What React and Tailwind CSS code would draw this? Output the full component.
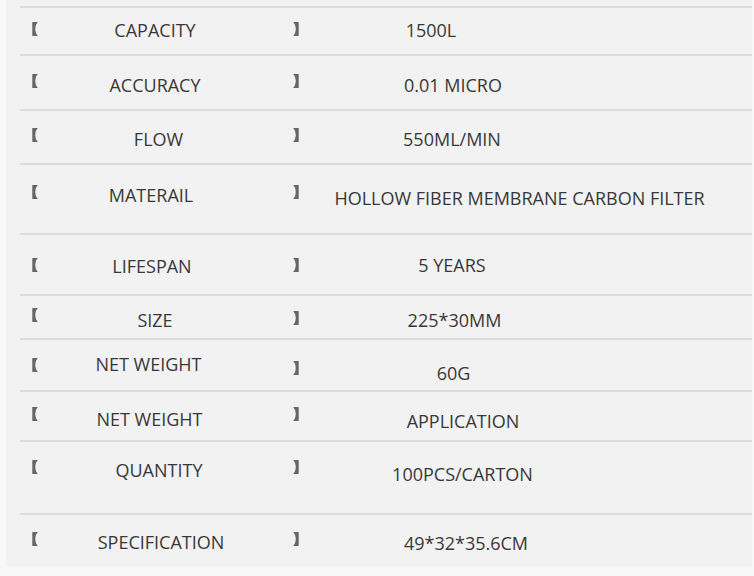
import React from "react";

const rows = [
  { label: "CAPACITY", value: "1500L", h: "h-[48px]", lb: "mt-[14px]", rb: "mt-[14px]", lt: "mt-[10px]", lw: "w-[234px]", vt: "mt-[10px]", vw: "w-[264px]" },
  { label: "ACCURACY", value: "0.01 MICRO", h: "h-[55px]", lb: "mt-[18px]", rb: "mt-[18px]", lt: "mt-[17px]", lw: "w-[234px]", vt: "mt-[17px]", vw: "w-[308px]" },
  { label: "FLOW", value: "550ML/MIN", h: "h-[54px]", lb: "mt-[17px]", rb: "mt-[17px]", lt: "mt-[16px]", lw: "w-[241px]", vt: "mt-[16px]", vw: "w-[306px]" },
  { label: "MATERAIL", value: "HOLLOW FIBER MEMBRANE CARBON FILTER", h: "h-[70px]", lb: "mt-[20px]", rb: "mt-[20px]", lt: "mt-[18px]", lw: "w-[226px]", vt: "mt-[21px]", vw: "w-[441px]" },
  { label: "LIFESPAN", value: "5 YEARS", h: "h-[61px]", lb: "mt-[23px]", rb: "mt-[23px]", lt: "mt-[19px]", lw: "w-[228px]", vt: "mt-[18px]", vw: "w-[306px]" },
  { label: "SIZE", value: "225*30MM", h: "h-[44px]", lb: "mt-[12px]", rb: "mt-[15px]", lt: "mt-[12px]", lw: "w-[234px]", vt: "mt-[12px]", vw: "w-[311px]" },
  { label: "NET WEIGHT", value: "60G", h: "h-[52px]", lb: "mt-[18px]", rb: "mt-[21px]", lt: "mt-[12px]", lw: "w-[221px]", vt: "mt-[21px]", vw: "w-[309px]" },
  { label: "NET WEIGHT", value: "APPLICATION", h: "h-[50px]", lb: "mt-[15px]", rb: "mt-[15px]", lt: "mt-[15px]", lw: "w-[223px]", vt: "mt-[17px]", vw: "w-[328px]" },
  { label: "QUANTITY", value: "100PCS/CARTON", h: "h-[73px]", lb: "mt-[18px]", rb: "mt-[18px]", lt: "mt-[16px]", lw: "w-[242px]", vt: "mt-[20px]", vw: "w-[327px]" },
  { label: "SPECIFICATION", value: "49*32*35.6CM", h: "h-[54px]", lb: "mt-[17px]", rb: "mt-[17px]", lt: "mt-[15px]", lw: "w-[246px]", vt: "mt-[16px]", vw: "w-[334px]" },
];

function LeftBracket({ className }) {
  return (
    <svg className={className} width="6" height="14" viewBox="0 0 6 14">
      <path d="M0.3 0 H5.8 Q3.2 2.5 3.2 7 Q3.2 11.5 5.8 14 H0.3 Z" fill="#666666" />
    </svg>
  );
}

function RightBracket({ className }) {
  return (
    <svg className={className} width="6" height="14" viewBox="0 0 6 14">
      <path d="M5.7 0 H0.2 Q2.8 2.5 2.8 7 Q2.8 11.5 0.2 14 H5.7 Z" fill="#666666" />
    </svg>
  );
}

export default function App() {
  return (
    <div className="w-[754px] h-[576px] bg-[#f8f8f8] overflow-hidden" style={{ fontFamily: '"Open Sans", "Noto Sans", sans-serif' }}>
      <div className="ml-[6px] w-[746px] h-[567px] bg-[#f2f2f2] pt-[6px]">
        <div className="ml-[14px] flex flex-col">
          {rows.map((r, i) => (
            <div key={i} className={`flex items-start border-t-2 border-[#dcdcdc] ${r.h}`}>
              <div className="w-[12px] shrink-0" />
              <LeftBracket className={`shrink-0 ${r.lb}`} />
              <div className="w-[255px] shrink-0">
                <div className={`${r.lw} ${r.lt} text-center whitespace-nowrap text-[18px] leading-[24px] text-[#383838]`}>{r.label}</div>
              </div>
              <RightBracket className={`shrink-0 ${r.rb}`} />
              <div className="shrink-0">
                <div className={`${r.vw} ${r.vt} text-center whitespace-nowrap text-[18px] leading-[24px] text-[#383838]`}>{r.value}</div>
              </div>
            </div>
          ))}
        </div>
      </div>
    </div>
  );
}
